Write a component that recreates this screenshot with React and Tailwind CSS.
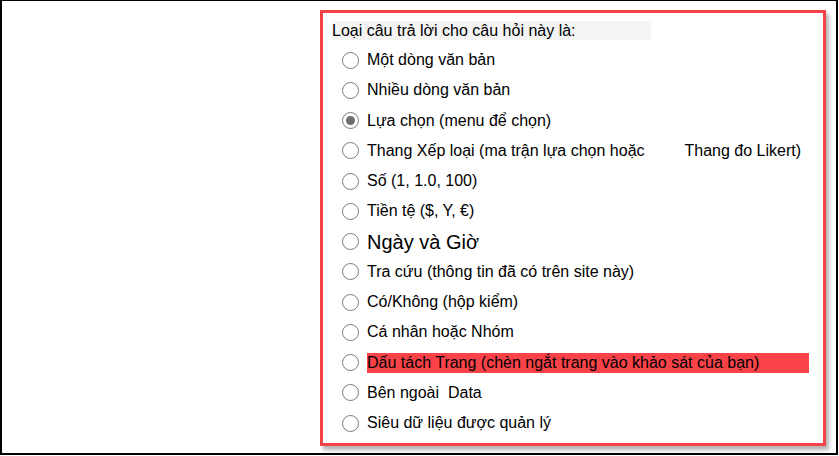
import React from "react";

function Radio({ checked }) {
  return (
    <span className="relative flex h-[17px] w-[17px] shrink-0 items-center justify-center rounded-full border-[1.5px] border-[#7a7a7a] bg-white">
      {checked && <span className="h-[9px] w-[9px] rounded-full bg-[#6e6e6e]" />}
    </span>
  );
}

const items = [
  { t: "Một dòng văn bản" },
  { t: "Nhiều dòng văn bản" },
  { t: "Lựa chọn (menu để chọn)", checked: true },
  { t: "Thang Xếp loại (ma trận lựa chọn hoặc", t2: "Thang đo Likert)" },
  { t: "Số (1, 1.0, 100)" },
  { t: "Tiền tệ ($, Y, €)" },
  { t: "Ngày và Giờ", big: true },
  { t: "Tra cứu (thông tin đã có trên site này)" },
  { t: "Có/Không (hộp kiểm)" },
  { t: "Cá nhân hoặc Nhóm" },
  { t: "Dấu tách Trang (chèn ngắt trang vào khảo sát của bạn)", red: true },
  { t: "Bên ngoài  Data" },
  { t: "Siêu dữ liệu được quản lý" },
];

export default function App() {
  return (
    <div
      className="h-[456px] w-[839px] bg-white"
      style={{ fontFamily: '"Liberation Sans", Arial, sans-serif' }}
    >
      <div className="h-[455px] w-[838px] border-t border-b-2 border-l-2 border-r-2 border-black bg-white pl-[318px] pt-[9px]">
        <div className="flex h-[436px] w-[506px] flex-col border-[3px] border-[#f44248] bg-white pl-[9px] pt-[8px] shadow-[3px_4px_4px_rgba(0,0,0,0.3)]">
          <div className="flex h-[19px] w-[319px] items-center bg-[#f4f4f4] text-[16px] leading-none text-black">
            Loại câu trả lời cho câu hỏi này là:
          </div>
          <div className="mt-[5px] flex flex-col pl-[10px]">
            {items.map((it, i) => (
              <div key={i} className="flex h-[30.25px] items-center">
                <Radio checked={it.checked} />
                <span
                  className={
                    "ml-[8px] flex items-center whitespace-pre text-black " +
                    (it.big ? "text-[20px] leading-none" : "text-[16px] leading-none") +
                    (it.red ? " h-[20px] w-[442px] bg-[#fa4348]" : "")
                  }
                >
                  {it.t}
                  {it.t2 && <span className="ml-[40px]">{it.t2}</span>}
                </span>
              </div>
            ))}
          </div>
        </div>
      </div>
    </div>
  );
}
